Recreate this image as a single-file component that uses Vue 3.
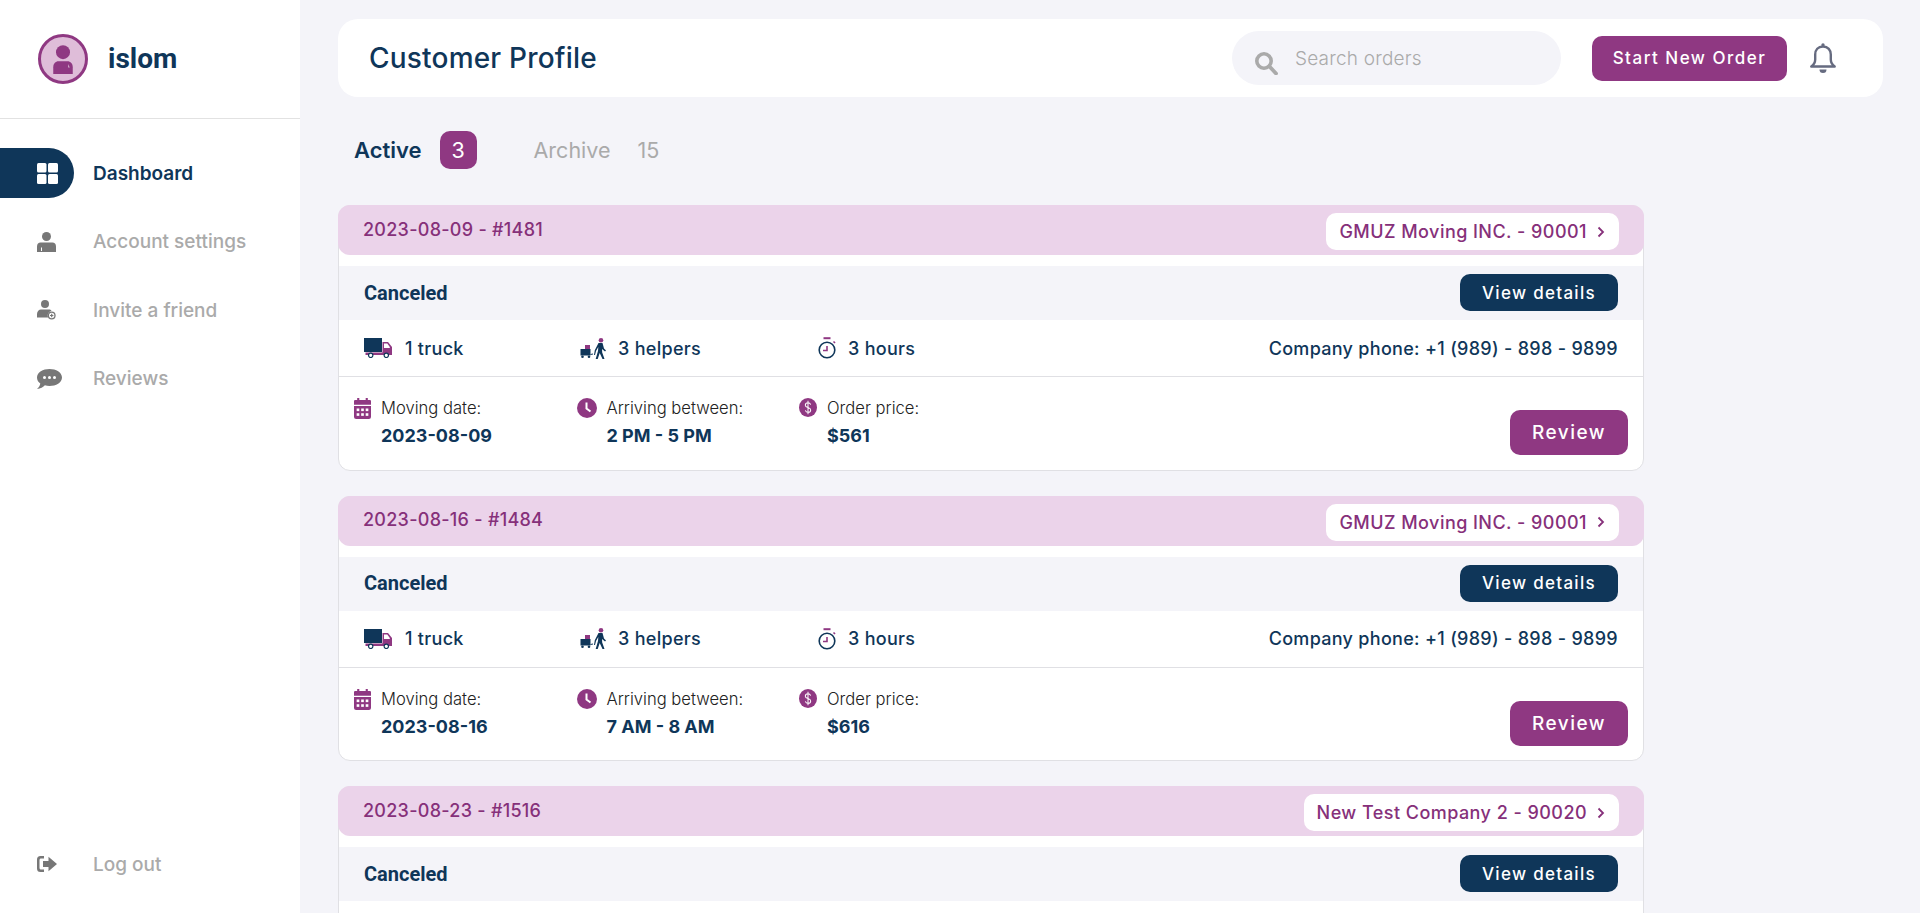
<script setup>
const navItems = [
  { label: 'Dashboard', active: true, icon: 'grid' },
  { label: 'Account settings', icon: 'user' },
  { label: 'Invite a friend', icon: 'invite' },
  { label: 'Reviews', icon: 'chat' },
]

const orders = [
  { title: '2023-08-09 - #1481', company: 'GMUZ Moving INC. - 90001', date: '2023-08-09', arrive: '2 PM - 5 PM', price: '$561' },
  { title: '2023-08-16 - #1484', company: 'GMUZ Moving INC. - 90001', date: '2023-08-16', arrive: '7 AM - 8 AM', price: '$616' },
  { title: '2023-08-23 - #1516', company: 'New Test Company 2 - 90020', date: '2023-08-23', arrive: '9 AM - 12 PM', price: '$480' },
]
</script>

<template>
  <div class="layout">
    <aside class="sidebar">
      <div class="profile">
        <div class="avatar">
          <svg viewBox="0 0 24 24" width="30" height="30">
            <circle cx="12" cy="6.5" r="5.6" fill="#8f3882" />
            <path d="M8.5 13.8h7c2.6 0 4.3 2 4.3 4.7V24H4.200v-5.5c0-2.700 1.700-4.700 4.300-4.700z" fill="#8f3882" />
            <path d="M16.3 16l.9 2.800h-.8z" fill="#fff" />
          </svg>
        </div>
        <span class="profile__name">islom</span>
      </div>
      <nav class="nav">
        <a v-for="item in navItems" :key="item.label" class="nav__item" :class="{ 'nav__item--active': item.active }">
          <span class="nav__icon">
            <svg v-if="item.icon === 'grid'" viewBox="0 0 21 21" width="21" height="21" fill="#fff">
              <rect x="0" y="0" width="9.5" height="9.5" rx="1.5" />
              <rect x="11" y="0" width="10" height="9.5" rx="1.5" />
              <rect x="0" y="11" width="9.5" height="10" rx="1.5" />
              <rect x="11" y="11" width="10" height="10" rx="1.5" />
            </svg>
            <svg v-else-if="item.icon === 'user'" viewBox="0 0 19 20" width="19" height="20" fill="#777">
              <circle cx="9.5" cy="4.5" r="4.5" />
              <path d="M3.5 10.5h12c2 0 3.5 1.5 3.5 4V20H0v-5.500c0-2.500 1.500-4 3.500-4z" />
              <rect x="4" y="15.5" width="1" height="3.5" fill="#fff" />
            </svg>
            <svg v-else-if="item.icon === 'invite'" viewBox="0 0 19 20" width="19" height="20">
              <circle cx="8" cy="4" r="4" fill="#777" />
              <path d="M4 9.5h8c1 0 2 .5 2.5 1.300A5 5 0 0 0 11 17.500H0v-3.500c0-2.500 2-4.500 4-4.500z" fill="#777" />
              <circle cx="14.7" cy="15.5" r="3.3" fill="#fff" stroke="#777" stroke-width="1.3" />
              <path d="M14.7 13.8v3.4M13 15.5h3.4" stroke="#777" stroke-width="1.2" />
            </svg>
            <svg v-else viewBox="0 0 25 20" width="25" height="20">
              <path d="M12.5 0C19 0 25 3.300 25 8.500S19 17 12.500 17c-1.700 0-3.200-.2-4.600-.7C6.300 18 3.500 20 0 20c1.800-1.500 3-3.500 3.300-5.500C1.200 13 0 11 0 8.500 0 3.300 6 0 12.500 0z" fill="#777" />
              <circle cx="7.5" cy="8.5" r="1.5" fill="#fff" />
              <circle cx="12.5" cy="8.5" r="1.5" fill="#fff" />
              <circle cx="17.5" cy="8.5" r="1.5" fill="#fff" />
            </svg>
          </span>
          <span class="nav__label">{{ item.label }}</span>
        </a>
      </nav>
      <a class="nav__item logout">
        <span class="nav__icon">
          <svg viewBox="0 0 20 16" width="20" height="16" fill="#777">
            <path d="M7 0v2.500H4c-.8 0-1.500.7-1.500 1.500v8c0 .8.700 1.500 1.500 1.500h3V16H3.500A3.500 3.500 0 0 1 0 12.500v-9A3.500 3.500 0 0 1 3.500 0z" />
            <path d="M6 5h5.500V.8L20 8l-8.500 7.200V11H6z" />
          </svg>
        </span>
        <span class="nav__label">Log out</span>
      </a>
    </aside>

    <main class="main">
      <header class="topbar">
        <h1 class="topbar__title">Customer Profile</h1>
        <div class="search">
          <svg class="search__icon" viewBox="0 0 24 24" width="24" height="24" fill="none" stroke="#aaa">
            <circle cx="10" cy="10" r="7.2" stroke-width="3.6" />
            <path d="M15.5 15.5L22 22.5" stroke-width="3.8" stroke-linecap="round" />
          </svg>
          <span>Search orders</span>
        </div>
        <button class="btn btn--purple btn--new">Start New Order</button>
        <svg class="bell" viewBox="0 0 26 32" width="26" height="32" fill="none" stroke="#666b80" stroke-width="2.4">
          <path d="M13 4.500c-5 0-7.800 3.500-7.800 8v5c0 3-1.500 5.300-3.900 7h23.400c-2.400-1.700-3.900-4-3.900-7v-5c0-4.500-2.800-8-7.800-8z" stroke-linejoin="round" />
          <circle cx="13" cy="3" r="1.7" fill="#666b80" stroke="none" />
          <path d="M9.5 27.500h7a3.500 3.500 0 0 1-7 0z" fill="#666b80" stroke="none" />
        </svg>
      </header>

      <div class="tabs">
        <span class="tabs__item tabs__item--active">Active</span>
        <span class="tabs__badge">3</span>
        <span class="tabs__item">Archive</span>
        <span class="tabs__count">15</span>
      </div>

      <section class="orders">
        <article v-for="order in orders" :key="order.title" class="order">
          <div class="order__head">
            <span class="order__title">{{ order.title }}</span>
            <a class="order__company">
              {{ order.company }}
              <svg viewBox="0 0 8 12" width="8" height="12" fill="none" stroke="#86307a" stroke-width="1.8">
                <path d="M1.5 1.500L6 6l-4.500 4.500" />
              </svg>
            </a>
          </div>
          <div class="order__status">
            <span class="order__state">Canceled</span>
            <button class="btn btn--navy">View details</button>
          </div>
          <div class="order__summary">
            <div class="order__fact order__fact--truck">
              <svg viewBox="0 0 28 20" width="28" height="20">
                <rect x="0" y="0" width="18" height="14" fill="#0f3659" />
                <path d="M18.5 4h5.500l4 5v8H1.500v-2.500h17z" fill="#8f3882" />
                <path d="M20 5.500h3.300l2.500 3.500v1h-5.800z" fill="#fff" />
                <circle cx="6.7" cy="17.3" r="2.2" fill="#fff" stroke="#0f3659" stroke-width="1.2" />
                <circle cx="22.3" cy="17.3" r="2.2" fill="#fff" stroke="#0f3659" stroke-width="1.2" />
              </svg>
              <span>1 truck</span>
            </div>
            <div class="order__fact order__fact--helpers">
              <svg viewBox="0 0 26 21" width="26" height="21">
                <rect x="0.5" y="11" width="10" height="6.5" fill="#0f3659" />
                <rect x="5" y="7" width="5" height="4" fill="#8f3882" />
                <circle cx="2.5" cy="18.8" r="1.3" fill="#0f3659" />
                <circle cx="9" cy="18.8" r="1.3" fill="#0f3659" />
                <path d="M10.5 16.500l2.500-.5" stroke="#0f3659" stroke-width="1" />
                <circle cx="21" cy="2.3" r="2.3" fill="#8f3882" />
                <path d="M18.5 5h4l1.500 5.500 2 2-1 1-3-2.500 .2 3.500 2.300 6.500h-2l-2.800-6-2 6h-2l2.300-8 .3-4-2.300 4-1 4h-1l.8-4.800z" fill="#0f3659" />
              </svg>
              <span>3 helpers</span>
            </div>
            <div class="order__fact order__fact--hours">
              <svg viewBox="0 0 20 22" width="20" height="22" fill="none" stroke="#0f3659" stroke-width="1.6">
                <circle cx="10" cy="13" r="7.8" />
                <path d="M10 9v4.500H6" stroke="#8f3882" />
                <path d="M6.5 1.200h7" stroke="#8f3882" stroke-width="2" />
                <path d="M16.5 4.500l1.500 1.500" stroke="#8f3882" />
              </svg>
              <span>3 hours</span>
            </div>
            <span class="order__phone">Company phone: +1 (989) - 898 - 9899</span>
          </div>
          <div class="order__details">
            <div class="detail">
              <svg class="detail__icon detail__icon--calendar" viewBox="0 0 16 20" width="17" height="21" fill="#8f3882" preserveAspectRatio="none">
                <path d="M3 0h2v3H3zM11 0h2v3h-2z" />
                <path d="M1.5 2H15a1 1 0 0 1 1 1v3.500H0V3a1 1 0 0 1 1.500-1zM0 7.500h16V18a2 2 0 0 1-2 2H2a2 2 0 0 1-2-2z" />
                <g fill="#fff">
                  <rect x="2.5" y="10" width="2.5" height="2.5" />
                  <rect x="6.75" y="10" width="2.5" height="2.5" />
                  <rect x="11" y="10" width="2.5" height="2.5" />
                  <rect x="2.5" y="14.5" width="2.5" height="2.5" />
                  <rect x="6.75" y="14.5" width="2.5" height="2.5" />
                  <rect x="11" y="14.5" width="2.5" height="2.5" />
                </g>
              </svg>
              <div>
                <div class="detail__label">Moving date:</div>
                <div class="detail__value">{{ order.date }}</div>
              </div>
            </div>
            <div class="detail">
              <svg class="detail__icon" viewBox="0 0 20 20" width="20" height="20">
                <circle cx="10" cy="10" r="10" fill="#8f3882" />
                <path d="M9.5 4.500V10.500L13.500 13.500" fill="none" stroke="#fff" stroke-width="2" />
              </svg>
              <div>
                <div class="detail__label">Arriving between:</div>
                <div class="detail__value">{{ order.arrive }}</div>
              </div>
            </div>
            <div class="detail">
              <svg class="detail__icon" viewBox="0 0 20 20" width="18" height="19" preserveAspectRatio="none">
                <circle cx="10" cy="10" r="10" fill="#8f3882" />
                <path d="M13 7c-.5-1.300-1.500-2-3-2-1.700 0-3 1-3 2.500S8.300 9.500 10 10s3 1 3 2.500-1.300 2.500-3 2.500c-1.500 0-2.500-.7-3-2M10 3v14" fill="none" stroke="#fff" stroke-width="1.1" />
              </svg>
              <div>
                <div class="detail__label">Order price:</div>
                <div class="detail__value">{{ order.price }}</div>
              </div>
            </div>
            <button class="btn btn--purple btn--review">Review</button>
          </div>
        </article>
      </section>
    </main>
  </div>
</template>

<style>
html,
body {
  margin: 0;
  overflow: hidden;
}
</style>

<style scoped>
.layout {
  display: flex;
  height: 913px;
  overflow: hidden;
  background: #f4f4f9;
  color: #0f3659;
  font-family: Inter, "Liberation Sans", sans-serif;
}

.sidebar {
  flex: 0 0 300px;
  display: flex;
  flex-direction: column;
  background: #fff;
}

.profile {
  display: flex;
  align-items: center;
  gap: 20px;
  height: 119px;
  padding-left: 38px;
  box-sizing: border-box;
  border-bottom: 1px solid #e2e2e2;
  flex: 0 0 auto;
}

.avatar {
  display: flex;
  align-items: center;
  justify-content: center;
  width: 50px;
  height: 50px;
  box-sizing: border-box;
  border: 3px solid #8f3882;
  border-radius: 50%;
  background: #dfbdd9;
}

.profile__name {
  margin-bottom: 2px;
  font-family: Roboto, sans-serif;
  font-size: 28px;
  font-weight: 700;
}

.nav {
  display: flex;
  flex-direction: column;
  gap: 18.6px;
  padding-top: 29px;
}

.nav__item {
  display: flex;
  align-items: center;
  height: 50px;
  color: #aaa;
  font-size: 19px;
  font-weight: 500;
}

.nav__item--active .nav__label {
  color: #0f3659;
  font-weight: 600;
}

.nav__icon {
  display: flex;
  align-items: center;
  justify-content: flex-start;
  width: 74px;
  height: 50px;
  padding-left: 37px;
  box-sizing: border-box;
  margin-right: 19px;
  flex: 0 0 auto;
}

.nav__item--active .nav__icon {
  background: #0f3659;
  border-radius: 0 25px 25px 0;
}

.logout {
  margin-top: auto;
  margin-bottom: 24px;
}

.main {
  flex: 1;
  min-width: 0;
  padding: 19px 37px 0 38px;
}

.topbar {
  display: flex;
  align-items: center;
  height: 78px;
  padding: 0 47px 0 31px;
  background: #fff;
  border-radius: 20px;
}

.topbar__title {
  flex: 1;
  margin: 0;
  font-size: 28px;
  font-weight: 500;
  letter-spacing: .2px;
}

.search {
  display: flex;
  align-items: center;
  gap: 17px;
  width: 329px;
  height: 54px;
  margin-right: 31px;
  padding-left: 22px;
  box-sizing: border-box;
  background: #f4f4f9;
  border-radius: 27px;
  color: #aaa;
  font-size: 19px;
  font-weight: 300;
  letter-spacing: .2px;
}

.search__icon {
  margin-top: 10px;
}

.btn {
  border: 0;
  padding: 0;
  font-family: inherit;
  font-weight: 500;
  color: #fff;
  cursor: pointer;
}

.btn--purple {
  background: #8f3882;
}

.btn--navy {
  width: 158px;
  height: 37px;
  margin-bottom: 1px;
  background: #0f3659;
  border-radius: 10px;
  font-size: 17px;
  letter-spacing: 1.3px;
}

.btn--new {
  width: 195px;
  height: 45px;
  margin-right: 23px;
  border-radius: 10px;
  font-size: 17px;
  letter-spacing: 1.5px;
}

.bell {
  flex: 0 0 auto;
}

.tabs {
  display: flex;
  align-items: center;
  height: 38px;
  margin: 34px 0 36px 16px;
  font-size: 21.5px;
  font-weight: 400;
  color: #aaa;
}

.tabs__item--active {
  color: #0f3659;
  font-size: 22px;
  font-weight: 600;
}

.tabs__badge {
  display: flex;
  align-items: center;
  justify-content: center;
  width: 37px;
  height: 38px;
  margin: 0 57px 0 18px;
  background: #8f3882;
  border-radius: 10px;
  color: #fff;
}

.tabs__count {
  margin-left: 27px;
}

.orders {
  display: flex;
  flex-direction: column;
  gap: 25px;
  width: 1306px;
}

.order {
  box-sizing: border-box;
  height: 265.5px;
  background: #fff;
  border: 1px solid #e0e0e4;
  border-radius: 12px;
}

.order__head {
  display: flex;
  align-items: center;
  justify-content: space-between;
  height: 50px;
  margin: -1px -1px 0;
  padding: 0 25px;
  background: #ebd3ea;
  border-radius: 12px;
  color: #86307a;
  font-size: 18px;
  font-weight: 500;
}

.order__title {
  margin-bottom: 2px;
  letter-spacing: .27px;
}

.order__company {
  display: flex;
  align-items: center;
  gap: 10px;
  height: 37px;
  margin-top: 3px;
  padding: 0 14px 0 13px;
  background: #fff;
  border-radius: 10px;
  letter-spacing: .45px;
}

.order__status {
  display: flex;
  align-items: center;
  justify-content: space-between;
  height: 54px;
  margin-top: 11px;
  padding: 0 25px;
  background: #f4f4f9;
}

.order__state {
  margin-bottom: 1px;
  font-family: Roboto, sans-serif;
  font-size: 20px;
  font-weight: 700;
}

.order__summary {
  display: flex;
  align-items: center;
  height: 56px;
  padding: 0 25px;
  border-bottom: 1px solid #e0e0e4;
  font-size: 18px;
  font-weight: 500;
  letter-spacing: .3px;
}

.order__fact {
  display: flex;
  align-items: center;
  gap: 13px;
}

.order__fact--truck {
  width: 216px;
}

.order__fact--helpers {
  gap: 12px;
  width: 237px;
}

.order__fact--hours {
  gap: 11px;
}

.order__phone {
  margin-left: auto;
}

.order__details {
  display: flex;
  align-items: flex-start;
  padding: 21px 15px 0 15px;
}

.detail {
  display: flex;
  gap: 10px;
  width: 222.5px;
}

.detail__icon {
  flex: 0 0 auto;
}

.detail__label {
  font-size: 16.6px;
  font-weight: 300;
  color: #222;
  line-height: 20px;
}

.detail__value {
  margin-top: 7px;
  font-size: 18px;
  font-weight: 700;
  line-height: 22px;
}

.btn--review {
  width: 118px;
  height: 45px;
  margin: 12px 0 0 auto;
  border-radius: 10px;
  font-size: 19px;
  letter-spacing: 1.5px;
}
</style>
